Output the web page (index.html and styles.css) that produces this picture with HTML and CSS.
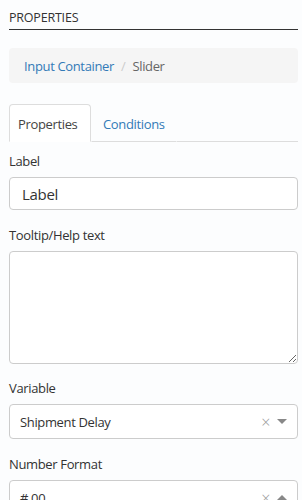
FILE: index.html
```html
<!DOCTYPE html>
<html>
<head>
<meta charset="utf-8">
<link rel="stylesheet" href="styles.css">
</head>
<body>
<div class="panel">
  <div class="title">PROPERTIES</div>
  <ol class="crumbs">
    <li class="crumb-link">Input Container</li>
    <li class="crumb-sep">/</li>
    <li class="crumb-current">Slider</li>
  </ol>
  <div class="tabs">
    <div class="tab active">Properties</div>
    <div class="tab">Conditions</div>
    <div class="tab-fill"></div>
  </div>
  <div class="field">
    <label class="lbl">Label</label>
    <input class="input" type="text" value="Label">
  </div>
  <div class="field">
    <label class="lbl">Tooltip/Help text</label>
    <textarea class="textarea"></textarea>
  </div>
  <div class="field">
    <label class="lbl">Variable</label>
    <div class="select">
      <span class="sel-text">Shipment Delay</span>
      <span class="sel-clear">×</span>
      <span class="caret down"></span>
    </div>
  </div>
  <div class="field">
    <label class="lbl">Number Format</label>
    <div class="select">
      <span class="sel-text">#.00</span>
      <span class="sel-clear">×</span>
      <span class="caret up"></span>
    </div>
  </div>
</div>
</body>
</html>
```
FILE: styles.css
```css
* { box-sizing: border-box; }
html, body { margin: 0; padding: 0; background: #fcfdfe; }
body {
  font-family: "Open Sans", "Noto Sans", sans-serif;
  font-size: 13px;
  letter-spacing: -0.35px;
  color: #333;
  overflow: hidden;
}
.panel {
  padding: 10px 4px 0 9px;
  display: flex;
  flex-direction: column;
}
.title {
  font-size: 12.5px;
  letter-spacing: -0.2px;
  line-height: 16px;
  padding-bottom: 3px;
  border-bottom: 1px solid #333;
  color: #333;
  margin-bottom: 18px;
}
.crumbs {
  list-style: none;
  margin: 0 0 21px 0;
  padding: 0 15px;
  height: 35px;
  display: flex;
  align-items: center;
  gap: 5px;
  background: #f5f5f5;
  border-radius: 4px;
}
.crumb-link { color: #337ab7; }
.crumb-sep { color: #ccc; padding: 0 2px; }
.crumb-current { color: #666; }
.tabs {
  display: flex;
  height: 38px;
  margin-bottom: 10px;
}
.tab {
  padding: 2px 11px 0 11px;
  display: flex;
  align-items: center;
  color: #337ab7;
  border: 1px solid transparent;
  border-bottom: 1px solid #ddd;
  border-radius: 4px 4px 0 0;
}
.tab.active {
  color: #444;
  background: #fff;
  border: 1px solid #ddd;
  border-bottom-color: transparent;
  width: 82px;
  padding-left: 8px;
}
.tab-fill { flex: 1; border-bottom: 1px solid #ddd; }
.field { display: flex; flex-direction: column; }
.lbl { line-height: 18px; margin-bottom: 7px; }
.input {
  height: 33px;
  border: 1px solid #ccc;
  border-radius: 4px;
  background: #fff;
  font-family: inherit;
  font-size: 15px;
  letter-spacing: -0.3px;
  color: #333;
  padding: 0 12px;
  margin-bottom: 16px;
  outline: none;
}
.textarea {
  height: 113px;
  border: 1px solid #ccc;
  border-radius: 4px;
  background: #fff;
  margin-bottom: 15px;
  resize: vertical;
  font-family: inherit;
}
.select {
  height: 35px;
  border: 1px solid #ccc;
  border-radius: 4px;
  background: #fff;
  display: flex;
  align-items: center;
  padding: 0 10px;
  margin-bottom: 16px;
}
.sel-text { flex: 1; }
.sel-clear { color: #999; font-size: 16px; font-weight: 300; margin-right: 7px; }
.caret {
  width: 0; height: 0;
  border-left: 5px solid transparent;
  border-right: 5px solid transparent;
}
.caret.down { border-top: 5px solid #888; }
.caret.up { border-bottom: 5px solid #888; }
```
